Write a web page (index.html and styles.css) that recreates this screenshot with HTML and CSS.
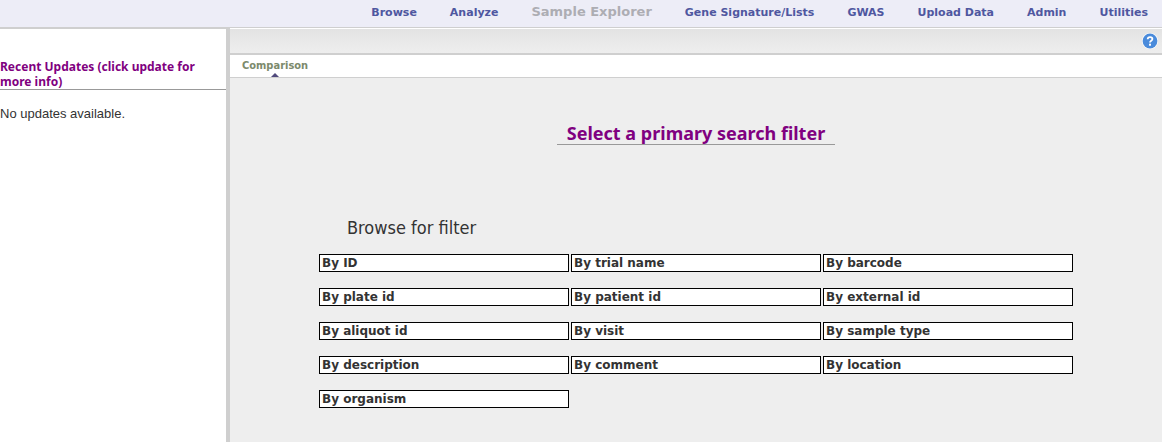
FILE: index.html
```html
<!doctype html>
<html lang="en">
  <head>
    <meta charset="UTF-8" />
    <meta name="viewport" content="width=device-width, initial-scale=1.0" />
    <title>Sample Explorer</title>
    <link rel="stylesheet" href="styles.css">
  </head>
  <body>
    <nav class="main-nav">
      <a href="#">Browse</a>
      <a href="#">Analyze</a>
      <a href="#" class="current">Sample Explorer</a>
      <a href="#">Gene Signature/Lists</a>
      <a href="#">GWAS</a>
      <a href="#">Upload Data</a>
      <a href="#">Admin</a>
      <a href="#">Utilities</a>
    </nav>

    <div class="layout">
      <aside class="sidebar">
        <h2 class="updates-title">Recent Updates (click update for more info)</h2>
        <p class="updates-text">No updates available.</p>
      </aside>

      <main class="content">
        <div class="toolbar">
          <button class="help-button" aria-label="Help">
            <svg width="16" height="16" viewBox="0 0 16 16">
              <circle cx="8" cy="8" r="8" fill="#fff" />
              <circle cx="8" cy="8" r="7.4" fill="#4a8bdb" />
              <path d="M5.7 6.2C5.7 3.4 10.4 3.5 10.4 6.1C10.4 7.8 8 7.7 8 9.5" fill="none" stroke="#fff" stroke-width="1.8" />
              <rect x="7" y="10.7" width="2" height="2" fill="#fff" />
            </svg>
          </button>
        </div>

        <div class="tabs">
          <a href="#" class="tab">Comparison</a>
        </div>

        <div class="panel">
          <h1 class="panel-title">Select a primary search filter</h1>

          <section class="filters">
            <h2 class="filters-title">Browse for filter</h2>
            <div class="filter-grid">
              <button class="filter">By ID</button>
              <button class="filter">By trial name</button>
              <button class="filter">By barcode</button>
              <button class="filter">By plate id</button>
              <button class="filter">By patient id</button>
              <button class="filter">By external id</button>
              <button class="filter">By aliquot id</button>
              <button class="filter">By visit</button>
              <button class="filter">By sample type</button>
              <button class="filter">By description</button>
              <button class="filter">By comment</button>
              <button class="filter">By location</button>
              <button class="filter">By organism</button>
            </div>
          </section>
        </div>
      </main>
    </div>
  </body>
</html>
```

FILE: styles.css
```css
* {
  box-sizing: border-box;
}

body {
  margin: 0;
  min-height: 100vh;
  display: flex;
  flex-direction: column;
  font-family: Verdana, "DejaVu Sans", sans-serif;
  color: #333;
  background-color: #fff;
}

a {
  text-decoration: none;
}

/* Top navigation */
.main-nav {
  display: flex;
  justify-content: flex-end;
  align-items: baseline;
  gap: 33px;
  height: 28px;
  padding: 2px 14px 0 0;
  border-bottom: 1px solid #cfcfcf;
  background-color: #ededf7;
  font-size: 11px;
  font-weight: bold;
  line-height: 20px;
  white-space: nowrap;
}

.main-nav a {
  color: #4f57a0;
}

.main-nav .current {
  color: #adadb3;
  font-size: 13px;
}

.layout {
  flex: 1;
  display: flex;
}

/* Recent updates */
.sidebar {
  flex: 0 0 230px;
  padding-top: 30px;
  border-top: 1px solid #cfcfcf;
  border-right: 4px solid #cfcfcf;
}

.updates-title {
  margin: 0;
  border-bottom: 1px solid #999;
  color: #800080;
  font-family: "Noto Sans", sans-serif;
  font-size: 12px;
  line-height: 15px;
}

.updates-text {
  margin: 16px 0 0;
  font-family: Arial, "Liberation Sans", sans-serif;
  font-size: 13px;
  line-height: 16px;
}

/* Main column */
.content {
  flex: 1;
  display: flex;
  flex-direction: column;
  min-width: 0;
}

.toolbar {
  display: flex;
  justify-content: flex-end;
  align-items: center;
  height: 27px;
  padding-right: 4px;
  border-top: 1px solid #fff;
  border-bottom: 2px solid #cfcfcf;
  background: linear-gradient(#e3e3e3, #eee);
}

.help-button {
  display: flex;
  padding: 0;
  border: 0;
  background: none;
}

.tabs {
  display: flex;
  height: 23px;
  padding-left: 12px;
  border-bottom: 1px solid #cfcfcf;
}

.tab {
  position: relative;
  color: #7c8a6c;
  font-family: Tahoma, "DejaVu Sans Condensed", sans-serif;
  font-size: 11px;
  font-weight: bold;
  line-height: 22px;
}

/* Marker under the open tab */
.tab::after {
  content: "";
  position: absolute;
  bottom: 0;
  left: 50%;
  margin-left: -4px;
  border: 4px solid transparent;
  border-top: 0;
  border-bottom-color: #514a7d;
}

.panel {
  flex: 1;
  display: flex;
  flex-direction: column;
  align-items: center;
  padding: 44px 16px 32px;
  background-color: #eee;
}

.panel-title {
  margin: 0;
  padding: 0 10px;
  border-bottom: 1px solid #999;
  color: #800080;
  font-family: "Noto Sans", sans-serif;
  font-size: 18px;
  line-height: 22px;
}

.filters {
  margin-top: 72px;
}

.filters-title {
  margin: 0 0 15px;
  padding-left: 28px;
  font-family: Tahoma, "DejaVu Sans Condensed", sans-serif;
  font-size: 18px;
  font-weight: normal;
  line-height: 22px;
}

.filter-grid {
  display: grid;
  grid-template-columns: repeat(3, 250px);
  gap: 16px 2px;
}

.filter {
  height: 18px;
  padding: 0 2px;
  border: 1px solid #000;
  background-color: #fff;
  color: #333;
  font-family: inherit;
  font-size: 12px;
  font-weight: bold;
  line-height: 16px;
  text-align: left;
}
```
